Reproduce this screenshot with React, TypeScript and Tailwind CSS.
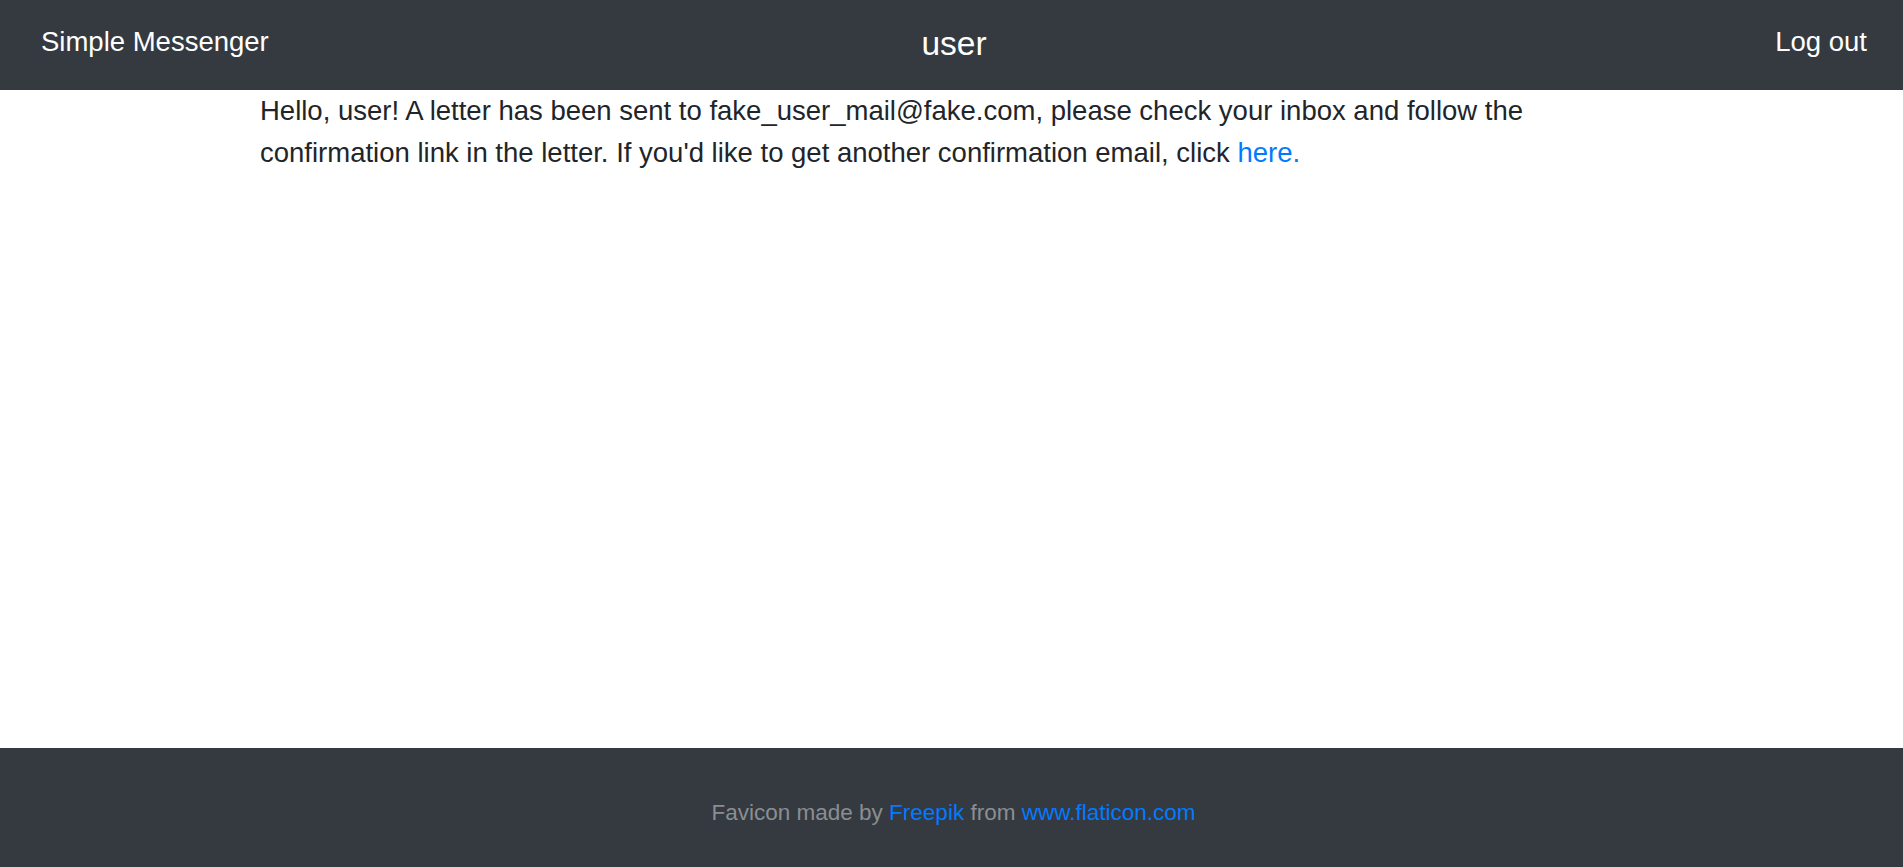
export default function App() {
  return (
    <div className="min-h-screen flex flex-col bg-white" style={{ fontFamily: '"Liberation Sans", Arial, sans-serif' }}>
      <header className="h-[90px] bg-[#343a40] grid grid-cols-3 items-start pt-[21px] pl-[41px] pr-[36px] text-white">
        <div className="text-[27.5px] leading-[40px] mt-[1px]">Simple Messenger</div>
        <div className="text-[33.5px] leading-[40px] text-center mt-[3px]">user</div>
        <div className="text-[27.5px] leading-[40px] text-right mt-[1px]">Log out</div>
      </header>
      <main className="flex-1 px-[260px]">
        <p className="text-[27.5px] leading-[42px] text-[#212529]">
          Hello, user! A letter has been sent to fake_user_mail@fake.com, please check your inbox and follow the confirmation link in the letter. If you'd like to get another confirmation email, click{' '}
          <a href="#" className="text-[#007bff]">here.</a>
        </p>
      </main>
      <footer className="h-[119px] bg-[#343a40] pt-[48px] pl-[4px] text-center text-[22.5px] leading-[33px] text-[#8a8e92]">
        Favicon made by <a href="#" className="text-[#007bff]">Freepik</a> from{' '}
        <a href="#" className="text-[#007bff]">www.flaticon.com</a>
      </footer>
    </div>
  );
}
